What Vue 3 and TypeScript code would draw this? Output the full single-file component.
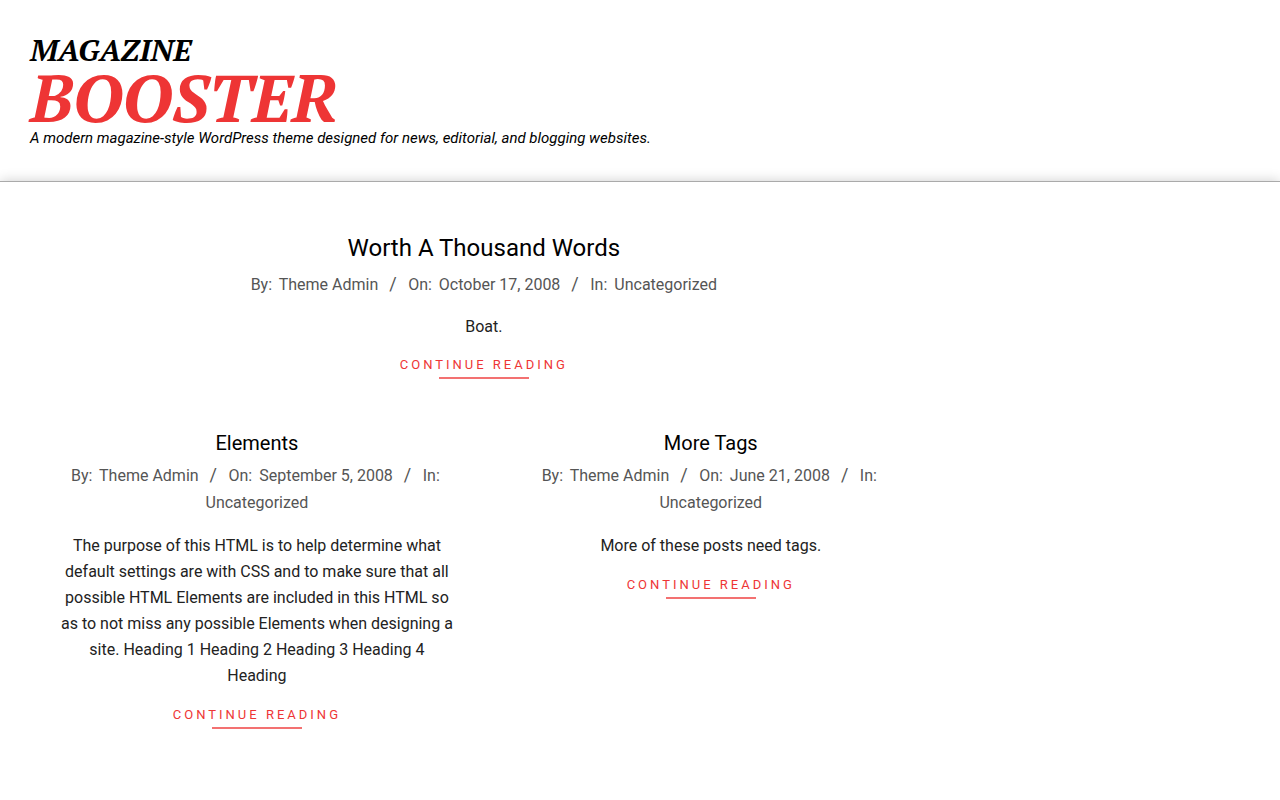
<script setup lang="ts">
interface Post {
  title: string
  date: string
  excerpt: string
}

const featured: Post = { title: 'Worth A Thousand Words', date: 'October 17, 2008', excerpt: 'Boat.' }

const posts: Post[] = [
  {
    title: 'Elements',
    date: 'September 5, 2008',
    excerpt:
      'The purpose of this HTML is to help determine what default settings are with CSS and to make sure that all possible HTML Elements are included in this HTML so as to not miss any possible Elements when designing a site. Heading 1 Heading 2 Heading 3 Heading 4 Heading',
  },
  { title: 'More Tags', date: 'June 21, 2008', excerpt: 'More of these posts need tags.' },
]
</script>

<template>
  <div class="page">
    <header class="site-header">
      <a class="brand" href="#">
        <span class="brand-small">MAGAZINE</span>
        <span class="brand-large">BOOSTER</span>
      </a>
      <p class="tagline">A modern magazine-style WordPress theme designed for news, editorial, and blogging websites.</p>
    </header>

    <main class="main">
      <div class="content">
        <article class="post featured">
          <h2><a href="#">{{ featured.title }}</a></h2>
          <div class="meta">
            <span class="label">By:</span> <a href="#">Theme Admin</a><span class="slash">/</span>
            <span class="label">On:</span> <a href="#">{{ featured.date }}</a><span class="slash">/</span>
            <span class="label">In:</span> <a href="#">Uncategorized</a>
          </div>
          <p class="excerpt">{{ featured.excerpt }}</p>
          <a class="more" href="#">Continue Reading</a>
        </article>

        <div class="grid">
          <article v-for="post in posts" :key="post.title" class="post">
            <h2><a href="#">{{ post.title }}</a></h2>
            <div class="meta">
              <span class="label">By:</span> <a href="#">Theme Admin</a><span class="slash">/</span>
              <span class="label">On:</span> <a href="#">{{ post.date }}</a><span class="slash">/</span>
              <span class="label">In:</span> <a href="#">Uncategorized</a>
            </div>
            <p class="excerpt">{{ post.excerpt }}</p>
            <a class="more" href="#">Continue Reading</a>
          </article>
        </div>
      </div>
    </main>
  </div>
</template>

<style>
body {
  margin: 0;
  background: #fff;
}
</style>

<style scoped>
.page {
  font: 16px/26px Roboto, sans-serif;
  color: #222;
}
a {
  color: inherit;
  text-decoration: none;
}
.site-header {
  padding: 33px 30px;
}
.brand {
  display: block;
  width: fit-content;
  font-family: "PT Serif", "Liberation Serif", serif;
  font-style: italic;
  font-weight: 700;
  color: #000;
}
.brand-small,
.brand-large {
  display: block;
}
.brand-small {
  font-size: 30px;
  line-height: 34px;
}
.brand-large {
  font-size: 66px;
  line-height: 61px;
  color: #ee3535;
}
.tagline {
  margin: 0;
  font-size: 15px;
  line-height: 20px;
  font-style: italic;
  color: #000;
}
.main {
  padding: 50px 30px;
  border-top: 1px solid #aaa;
  background: #fff;
  box-shadow: 0 0 12px rgba(0, 0, 0, 0.2);
}
.content {
  width: 74.4%;
}
.post {
  text-align: center;
}
h2 {
  margin: 0;
  font-weight: 400;
  font-size: 20px;
  line-height: 30px;
  color: #000;
}
.featured h2 {
  font-size: 24px;
  line-height: 32px;
}
.meta {
  margin-top: 3px;
  line-height: 27px;
  color: #555;
}
.featured .meta {
  margin-top: 6px;
}
.label {
  margin-right: 3px;
}
.slash {
  margin: 0 7px 0 11px;
  font-size: 18px;
}
.slash::after {
  content: " ";
}
.excerpt {
  margin: 16px 0 13px;
}
.grid .excerpt {
  margin: 17px 0 14px;
}
.more {
  display: block;
  width: fit-content;
  margin: 0 auto;
  font-size: 13px;
  line-height: 24px;
  letter-spacing: 3px;
  text-transform: uppercase;
  color: #ee3535;
}
.more::after {
  content: "";
  display: block;
  width: 90px;
  height: 2px;
  margin: 0 auto;
  background: currentColor;
  opacity: 0.7;
}
.grid {
  display: grid;
  grid-template-columns: 1fr 1fr;
  margin-top: 49px;
}
.grid .post {
  padding: 0 30px;
}
</style>
